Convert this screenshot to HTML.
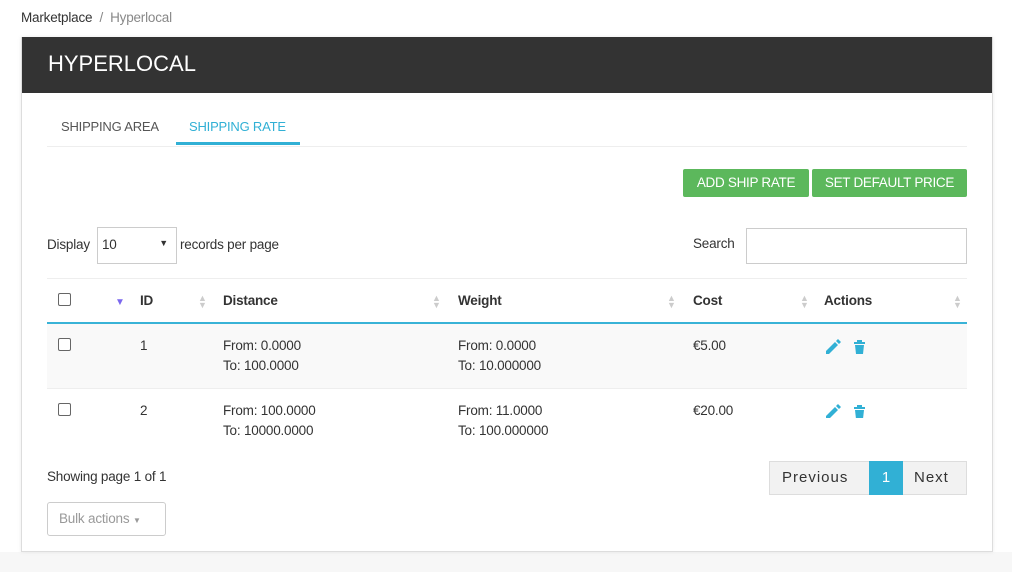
<!DOCTYPE html>
<html><head><meta charset="utf-8"><style>
*{box-sizing:border-box;margin:0;padding:0}
body{width:1012px;height:572px;background:#fff;font-family:"Liberation Sans",sans-serif;color:#333;font-size:13.5px;position:relative;overflow:hidden;letter-spacing:-0.2px}
.a{position:absolute}
.bot{left:0;top:552px;width:1012px;height:20px;background:#f7f7f7}
.card{left:21px;top:37px;width:972px;height:515px;border:1px solid #ddd;background:#fff;box-shadow:0 0 4px rgba(0,0,0,.08)}
.hd{left:22px;top:37px;width:970px;height:56px;background:#333;color:#fff;font-size:22px;padding:14px 26px;letter-spacing:0}
.btn{background:#5cb85c;color:#fff;font-size:13.5px;height:28px;line-height:28px;text-align:center;border-radius:2px;letter-spacing:-0.3px}
.th{font-size:13.5px;font-weight:bold;color:#333}
.sort{color:#ccc;font-size:9px;line-height:7px}
.td{font-size:13.5px;line-height:20px;color:#333}
.cb{width:13px;height:13px;border:1px solid #666;border-radius:2px;background:#fff}
</style></head><body>
<div class="a" style="left:21px;top:10px">Marketplace <span style="color:#888">&nbsp;/&nbsp; Hyperlocal</span></div>
<div class="a bot"></div>
<div class="a card"></div>
<div class="a hd">HYPERLOCAL</div>
<div class="a" style="left:47px;top:146px;width:920px;height:1px;background:#eee"></div>
<div class="a" style="left:61px;top:119px;font-size:13px;color:#555">SHIPPING AREA</div>
<div class="a" style="left:189px;top:119px;font-size:13px;color:#31b0d5">SHIPPING RATE</div>
<div class="a" style="left:176px;top:142px;width:124px;height:3px;background:#31b0d5"></div>
<div class="a btn" style="left:683px;top:169px;width:126px">ADD SHIP RATE</div>
<div class="a btn" style="left:812px;top:169px;width:155px">SET DEFAULT PRICE</div>
<div class="a" style="left:47px;top:237px">Display</div>
<div class="a" style="left:97px;top:227px;width:80px;height:37px;border:1px solid #ccc;padding:9px 4px">10<span style="position:absolute;right:8px;top:10px;font-size:9px">▼</span></div>
<div class="a" style="left:180px;top:237px">records per page</div>
<div class="a" style="left:693px;top:236px">Search</div>
<div class="a" style="left:746px;top:228px;width:221px;height:36px;border:1px solid #ccc"></div>
<div class="a" style="left:47px;top:278px;width:920px;height:1px;background:#eee"></div>
<div class="a cb" style="left:58px;top:293px"></div>
<div class="a" style="left:115px;top:297px;color:#7b68ee;font-size:10px">▼</div>
<div class="a th" style="left:140px;top:293px">ID</div><div class="a sort" style="left:198px;top:295px">▲<br>▼</div>
<div class="a th" style="left:223px;top:293px">Distance</div><div class="a sort" style="left:432px;top:295px">▲<br>▼</div>
<div class="a th" style="left:458px;top:293px">Weight</div><div class="a sort" style="left:667px;top:295px">▲<br>▼</div>
<div class="a th" style="left:693px;top:293px">Cost</div><div class="a sort" style="left:800px;top:295px">▲<br>▼</div>
<div class="a th" style="left:824px;top:293px">Actions</div><div class="a sort" style="left:953px;top:295px">▲<br>▼</div>
<div class="a" style="left:47px;top:322px;width:920px;height:2px;background:#39b3d7"></div>
<div class="a" style="left:47px;top:324px;width:920px;height:64px;background:#f9f9f9"></div>
<div class="a" style="left:47px;top:388px;width:920px;height:1px;background:#eee"></div>
<div class="a cb" style="left:58px;top:338px"></div>
<div class="a td" style="left:140px;top:336px">1</div>
<div class="a td" style="left:223px;top:336px">From: 0.0000<br>To: 100.0000</div>
<div class="a td" style="left:458px;top:336px">From: 0.0000<br>To: 10.000000</div>
<div class="a td" style="left:693px;top:336px">€5.00</div>
<div class="a cb" style="left:58px;top:403px"></div>
<div class="a td" style="left:140px;top:401px">2</div>
<div class="a td" style="left:223px;top:401px">From: 100.0000<br>To: 10000.0000</div>
<div class="a td" style="left:458px;top:401px">From: 11.0000<br>To: 100.000000</div>
<div class="a td" style="left:693px;top:401px">€20.00</div>
<svg class="a" style="left:825px;top:338px" width="44" height="80" viewBox="0 0 44 80">
<g fill="#31b0d5">
<path d="M1 13 L1 16 L4 16 L13 7 L10 4 Z M11 3 L13 1 L16 4 L14 6 Z"/>
<path d="M29 4 H40 V6 H29 Z M32 2 H37 V4 H32 Z M30 7 H39 L38 16 H31 Z"/>
<g transform="translate(0,65)"><path d="M1 13 L1 16 L4 16 L13 7 L10 4 Z M11 3 L13 1 L16 4 L14 6 Z"/>
<path d="M29 4 H40 V6 H29 Z M32 2 H37 V4 H32 Z M30 7 H39 L38 16 H31 Z"/></g>
</g></svg>
<div class="a" style="left:47px;top:469px">Showing page 1 of 1</div>
<div class="a" style="left:769px;top:461px;width:198px;height:34px;border:1px solid #ddd;background:#f2f2f2"></div>
<div class="a" style="left:782px;top:469px;font-size:15px;letter-spacing:1px">Previous</div>
<div class="a" style="left:869px;top:461px;width:34px;height:34px;background:#31b0d5;color:#fff;text-align:center;line-height:34px;font-size:15px">1</div>
<div class="a" style="left:914px;top:469px;font-size:15px;letter-spacing:1px">Next</div>
<div class="a" style="left:47px;top:502px;width:119px;height:34px;border:1px solid #ccc;border-radius:3px;color:#999;padding:8px 11px">Bulk actions <span style="font-size:8px">▼</span></div>
</body></html>
